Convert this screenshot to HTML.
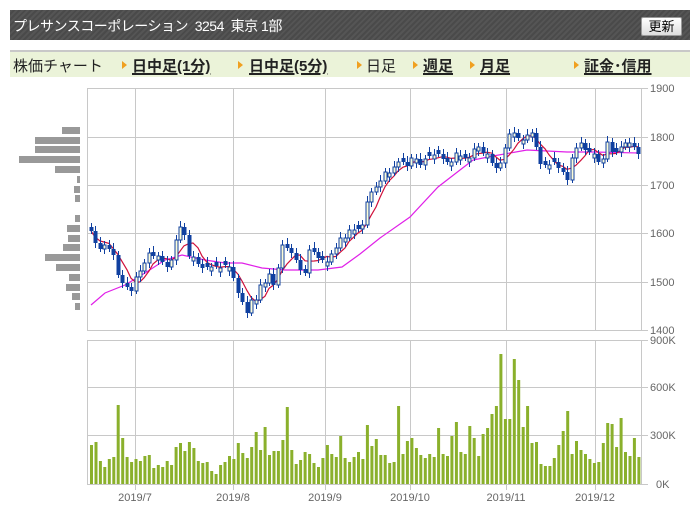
<!DOCTYPE html>
<html><head><meta charset="utf-8">
<style>
html,body{margin:0;padding:0;background:#fff;width:700px;height:525px;overflow:hidden;font-family:"Liberation Sans","Noto Sans CJK JP",sans-serif}
#hdr{position:absolute;left:10px;top:10px;width:680px;height:30px;background:#4e4e4e;background-image:repeating-linear-gradient(135deg,#555 0 2px,#4a4a4a 2px 4px)}
#hdr .t{position:absolute;left:3px;top:6px;color:#fff;font-size:14px;letter-spacing:-0.5px;white-space:nowrap}
#btn{position:absolute;left:631px;top:7px;width:39px;height:17px;background:linear-gradient(#fff,#ddd);border:1px solid #999;border-radius:2px;font-size:13px;line-height:17px;text-align:center;color:#000}
#nav{position:absolute;left:10px;top:50px;width:680px;height:25px;background:#ebf3d9;border-top:2px solid #c8c8c8}
#nav span{position:absolute;top:3px;font-size:15px;white-space:nowrap;color:#222}
#nav b{position:absolute;top:3px;font-size:15px;white-space:nowrap;color:#222;text-decoration:underline;text-decoration-thickness:2px;text-underline-offset:2px}
#nav i{position:absolute;top:9px;width:0;height:0;border-left:5px solid #f0a020;border-top:4px solid transparent;border-bottom:4px solid transparent}
svg{position:absolute;left:0;top:0}
</style></head><body>
<div id="hdr"><div class="t">プレサンスコーポレーション&nbsp; 3254&nbsp; 東京 1部</div><div id="btn">更新</div></div>
<div id="nav">
<span style="left:3px">株価チャート</span>
<i style="left:112px"></i><b style="left:122px">日中足(1分)</b>
<i style="left:228px"></i><b style="left:239px">日中足(5分)</b>
<i style="left:347px"></i><span style="left:356px">日足</span>
<i style="left:403px"></i><b style="left:413px">週足</b>
<i style="left:460px"></i><b style="left:470px">月足</b>
<i style="left:564px"></i><b style="left:574px">証金･信用</b>
</div>
<svg id="s" width="700" height="525" xmlns="http://www.w3.org/2000/svg"></svg>
<script>
var s=document.getElementById('s'),h='';
function L(x1,y1,x2,y2,c,w){h+='<line x1="'+x1+'" y1="'+y1+'" x2="'+x2+'" y2="'+y2+'" stroke="'+(c||'#c8c8c8')+'" stroke-width="'+(w||1)+'"/>';}
function R(x,y,w,hh,f,st){h+='<rect x="'+x+'" y="'+y+'" width="'+w+'" height="'+hh+'" fill="'+f+'"'+(st?' stroke="'+st+'" stroke-width="1"':'')+'/>';}
function T(x,y,t,a){h+='<text x="'+x+'" y="'+y+'" font-size="11" fill="#666" text-anchor="'+(a||'start')+'" font-family="Liberation Sans,sans-serif">'+t+'</text>';}
var vx=[135,233,325,410,506,595];
[88,137,185,233,282,330].forEach(function(y){L(87,y+.5,648,y+.5);});
[340,387,435,484].forEach(function(y){L(87,y+.5,648,y+.5);});
vx.forEach(function(x){L(x+.5,88,x+.5,330);L(x+.5,340,x+.5,490);});
L(87.5,88,87.5,330);L(641.5,88,641.5,330);L(87.5,340,87.5,484);L(641.5,340,641.5,484);
L(87,330.5,641,330.5);
T(650,92,'1900');T(650,141,'1800');T(650,189,'1700');T(650,237,'1600');T(650,286,'1500');T(650,334,'1400');
T(650,344,'900K');T(650,391,'600K');T(650,439,'300K');T(656,488,'0K');
var dl=['2019/7','2019/8','2019/9','2019/10','2019/11','2019/12'];
vx.forEach(function(x,i){T(x,501,dl[i],'middle');});
var pf=[[62,127],[35,137],[35,146],[19,156],[55,166],[77,176],[74,186],[75,195],[75,215],[67,225],[68,235],[63,244],[45,254],[56,264],[69,274],[66,284],[72,293],[75,303]];
pf.forEach(function(p){R(p[0],p[1],80-p[0],7,'#999');});
var t1=[315,306,363,381,357,351,195,294,351,366,357,363,348,345,384,375,381,363,375,321,309,333,306,324,363,369,366,393,402,375,366,348,357,309,339,354,321,276,330,261,345,333,333,300,201,330,372,360,336,342,369,381,354,315,342,351,288,354,366,351,336,357];
var t2=[255,318,297,345,345,369,366,198,342,303,294,324,345,354,342,351,264,342,348,288,246,336,342,258,294,348,282,264,222,198,42,237,237,57,120,261,198,309,306,372,378,378,354,315,273,213,342,303,330,342,357,369,366,309,249,252,321,234,336,348,294,351];
var vols=t1.concat(t2);
vols.forEach(function(t,i){var x=90+i*4.45,hh=(432-t)/3;R(x.toFixed(1),(484-hh).toFixed(1),3,hh.toFixed(1),'#8ab02c');});
var c=[[91,231],[95,243],[99,249],[104,245],[108,249],[113,255],[117,275],[122,283],[126,287],[130,291],[135,277],[139,271],[144,263],[148,253],[153,256],[157,256],[162,262],[166,267],[170,260],[175,240],[179,227],[184,235],[188,256],[193,257],[197,264],[202,268],[206,267],[210,267],[215,266],[219,268],[224,265],[228,267],[233,278],[237,293],[242,302],[246,313],[250,300],[255,300],[259,285],[264,283],[268,274],[273,285],[277,268],[282,245],[286,248],[290,253],[295,260],[299,270],[304,273],[308,250],[313,252],[317,258],[321,260],[326,262],[330,254],[335,248],[339,238],[344,238],[348,230],[353,230],[357,229],[363,225],[367,202],[371,192],[375,187],[379,181],[384,172],[389,173],[393,167],[397,162],[402,162],[407,166],[411,158],[415,159],[419,165],[424,159],[428,156],[433,155],[437,154],[442,159],[446,162],[450,162],[455,153],[459,156],[464,158],[468,158],[473,149],[477,147],[482,153],[486,154],[490,163],[495,168],[499,163],[504,148],[508,134],[513,133],[517,138],[522,140],[526,135],[530,133],[535,147],[540,164],[544,165],[549,165],[553,162],[557,168],[562,172],[566,180],[570,158],[575,148],[579,143],[584,150],[588,152],[593,154],[597,162],[602,159],[606,142],[611,152],[615,152],[619,147],[624,143],[628,143],[633,147],[637,154]];
c.forEach(function(p,i){p[0]=Math.round(91+i*4.45);});
var mag=[[91,305],[105,293],[125,285],[145,273],[165,260],[182,255],[205,260],[225,263],[242,263],[262,268],[285,270],[318,270],[342,267],[360,254],[380,238],[410,217],[438,187],[460,170],[473,160],[493,156],[527,150],[547,151],[567,152],[593,152],[640,153]];
h+='<polyline fill="none" stroke="#e020e8" stroke-width="1.2" points="'+mag.map(function(p){return p.join(',');}).join(' ')+'"/>';
var red=[];for(var i=0;i<c.length;i++){var a=Math.max(0,i-4),sm=0,n=0;for(var j=a;j<=i;j++){sm+=c[j][1];n++;}red.push(c[i][0]+','+(sm/n).toFixed(1));}
h+='<polyline fill="none" stroke="#d0103a" stroke-width="1.2" points="'+red.join(' ')+'"/>';
c.forEach(function(p,i){var o=i?c[i-1][1]:p[1]-3,cl=p[1];if(Math.abs(o-cl)<4){o=cl+(i%2?4:-4);}
var top=Math.min(o,cl),bot=Math.max(o,cl),up=cl<o,x=p[0];
L(x+.5,top-4-(i%3),x+.5,bot+3+(i%2)*2,'#1040a0',1);
if(up)R(x-1,top,3,bot-top,'#fcfcd8','#1040a0');else R(x-1.5,top,4,bot-top,'#1040a0');});
s.innerHTML=h;
</script>
</body></html>
